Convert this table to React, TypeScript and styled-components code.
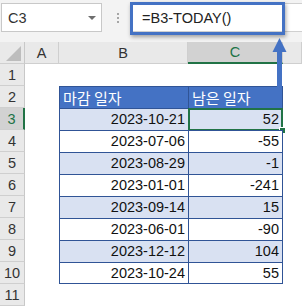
import styled, { createGlobalStyle } from 'styled-components';

const GlobalStyle = createGlobalStyle`
  html, body {
    margin: 0;
    padding: 0;
    background: #fff;
  }
  body {
    font-family: "Liberation Sans", Arial, sans-serif;
  }
`;

const GREEN = '#217346';
const TABLE_LINE = '#305496';
const ACCENT = '#4472c4';

// Whole screenshot area
const Page = styled.div`
  position: relative;
  width: 302px;
  height: 306px;
  overflow: hidden;
  background: #fff;
`;

// Name box + formula bar
const Toolbar = styled.div`
  display: flex;
  align-items: flex-start;
  height: 42px;
  box-sizing: border-box;
  padding: 3px 0 0 1px;
  background: #f3f3f3;
`;

const NameBox = styled.div`
  display: flex;
  align-items: center;
  justify-content: space-between;
  width: 101px;
  height: 29px;
  box-sizing: border-box;
  padding: 0 5px 0 6px;
  border: 1px solid #c8c8c8;
  background: #fff;
  color: #333;
  font-size: 14.5px;
`;

const Caret = styled.span`
  width: 0;
  height: 0;
  border-left: 4px solid transparent;
  border-right: 4px solid transparent;
  border-top: 4px solid #6e6e6e;
`;

const Grip = styled.div`
  display: flex;
  flex-direction: column;
  gap: 2px;
  margin: 10px 0 0 15px;
`;

const GripDot = styled.span`
  width: 2px;
  height: 2px;
  background: #a6a6a6;
`;

const FormulaInput = styled.div`
  flex: 1;
  display: flex;
  align-items: center;
  height: 29px;
  box-sizing: border-box;
  margin-left: 11px;
  padding-left: 11px;
  border: 1px solid #d0d0d0;
  border-right: none;
  background: #fff;
  color: #222;
  font-size: 14.5px;
`;

// Blue call-out frame drawn over the formula bar
const Highlight = styled.div`
  position: absolute;
  left: 130px;
  top: 2px;
  width: 155px;
  height: 33px;
  box-sizing: border-box;
  border: 3px solid ${ACCENT};
  box-shadow: 1px 2px 4px rgba(0, 0, 0, 0.35);
`;

const Arrow = styled.svg`
  position: absolute;
  left: 270px;
  top: 36px;
`;

// Spreadsheet grid
const Sheet = styled.div`
  display: grid;
  grid-template-columns: 25px 34px 129px 95px 1fr;
  grid-auto-rows: 22px;
`;

const Corner = styled.div`
  display: flex;
  align-items: flex-end;
  justify-content: flex-end;
  box-sizing: border-box;
  padding: 0 3px 2px 0;
  background: #e9e9e9;
  border-right: 1px solid #c8c8c8;
  border-bottom: 1px solid #cfcfcf;
`;

const ColHeader = styled.div<{ $active?: boolean }>`
  display: flex;
  align-items: center;
  justify-content: center;
  box-sizing: border-box;
  background: ${({ $active }) => ($active ? '#d2d2d2' : '#e9e9e9')};
  color: ${({ $active }) => ($active ? GREEN : '#333')};
  border-right: 1px solid #cfcfcf;
  border-bottom: ${({ $active }) => ($active ? `2px solid ${GREEN}` : '1px solid #cfcfcf')};
  font-size: 14.5px;
`;

const RowHeader = styled.div<{ $active?: boolean }>`
  display: flex;
  align-items: center;
  justify-content: center;
  box-sizing: border-box;
  background: ${({ $active }) => ($active ? '#d2d2d2' : '#e9e9e9')};
  color: ${({ $active }) => ($active ? GREEN : '#333')};
  border-right: ${({ $active }) => ($active ? `2px solid ${GREEN}` : '1px solid #c8c8c8')};
  border-bottom: 1px solid #cfcfcf;
  font-size: 14.5px;
`;

const Cell = styled.div`
  background: #fff;
`;

const TableCell = styled.div<{ $head?: boolean; $band?: boolean; $last?: boolean; $edge?: boolean }>`
  position: relative;
  box-sizing: border-box;
  padding: ${({ $head }) => ($head ? '0 0 0 3px' : '0 3px 0 0')};
  background: ${({ $head, $band }) => ($head ? ACCENT : $band ? '#d9e1f2' : '#fff')};
  color: ${({ $head }) => ($head ? '#fff' : '#111')};
  border-top: 1px solid ${TABLE_LINE};
  border-left: 1px solid ${TABLE_LINE};
  border-right: ${({ $edge }) => ($edge ? `1px solid ${TABLE_LINE}` : 'none')};
  border-bottom: ${({ $last }) => ($last ? `1px solid ${TABLE_LINE}` : 'none')};
  text-align: ${({ $head }) => ($head ? 'left' : 'right')};
  font-family: ${({ $head }) =>
    $head ? '"Noto Sans CJK KR", "Noto Sans", sans-serif' : '"Liberation Sans", Arial, sans-serif'};
  font-size: ${({ $head }) => ($head ? '15px' : '14.5px')};
  line-height: 21px;
  white-space: nowrap;
`;

const Selection = styled.div`
  position: absolute;
  inset: -1px;
  border: 2px solid ${GREEN};
  pointer-events: none;
`;

const FillHandle = styled.span`
  position: absolute;
  right: -5px;
  bottom: -5px;
  width: 7px;
  height: 7px;
  box-sizing: border-box;
  background: ${GREEN};
  border: 1px solid #fff;
`;

const rows = [
  { date: '2023-10-21', left: 52 },
  { date: '2023-07-06', left: -55 },
  { date: '2023-08-29', left: -1 },
  { date: '2023-01-01', left: -241 },
  { date: '2023-09-14', left: 15 },
  { date: '2023-06-01', left: -90 },
  { date: '2023-12-12', left: 104 },
  { date: '2023-10-24', left: 55 },
];

export default function App() {
  return (
    <Page>
      <GlobalStyle />
      <Toolbar>
        <NameBox>
          <span>C3</span>
          <Caret />
        </NameBox>
        <Grip>
          <GripDot />
          <GripDot />
          <GripDot />
        </Grip>
        <FormulaInput>=B3-TODAY()</FormulaInput>
      </Toolbar>

      <Sheet>
        <Corner>
          <svg width="15" height="15" viewBox="0 0 15 15">
            <polygon points="15,0 15,15 0,15" fill="#bdbdbd" />
          </svg>
        </Corner>
        <ColHeader>A</ColHeader>
        <ColHeader>B</ColHeader>
        <ColHeader $active>C</ColHeader>
        <ColHeader />

        <RowHeader>1</RowHeader>
        <Cell />
        <Cell />
        <Cell />
        <Cell />

        <RowHeader>2</RowHeader>
        <Cell />
        <TableCell $head>마감 일자</TableCell>
        <TableCell $head $edge>남은 일자</TableCell>
        <Cell />

        {rows.map((r, i) => {
          const rowNo = i + 3;
          const band = i % 2 === 0;
          const last = i === rows.length - 1;
          return [
            <RowHeader key={`h${rowNo}`} $active={rowNo === 3}>{rowNo}</RowHeader>,
            <Cell key={`a${rowNo}`} />,
            <TableCell key={`b${rowNo}`} $band={band} $last={last}>{r.date}</TableCell>,
            <TableCell key={`c${rowNo}`} $band={band} $last={last} $edge>
              {r.left}
              {rowNo === 3 && (
                <Selection>
                  <FillHandle />
                </Selection>
              )}
            </TableCell>,
            <Cell key={`d${rowNo}`} />,
          ];
        })}

        <RowHeader>11</RowHeader>
        <Cell />
        <Cell />
        <Cell />
        <Cell />
      </Sheet>

      <Highlight />
      <Arrow width="20" height="72" viewBox="0 0 20 72">
        <polygon points="9.5,2 2.5,16 16.5,16" fill={ACCENT} />
        <rect x="7" y="15" width="5" height="56" fill={ACCENT} />
      </Arrow>
    </Page>
  );
}
